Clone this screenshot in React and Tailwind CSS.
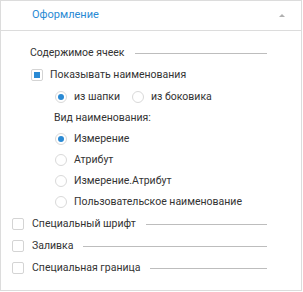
import React from "react";

const font = { fontFamily: 'Roboto, "Noto Sans", sans-serif' };

function Check({ checked }) {
    return (
        <span className="w-[12px] h-[12px] shrink-0 rounded-[2px] border border-[#d4d4d4] bg-white flex items-center justify-center">
            {checked && <span className="w-[6px] h-[6px] bg-[#2a8ad4]" />}
        </span>
    );
}

function Radio({ checked }) {
    return (
        <span className="w-[12px] h-[12px] shrink-0 rounded-full border border-[#d9d9d9] bg-white flex items-center justify-center">
            {checked && <span className="w-[6px] h-[6px] rounded-full bg-[#2a8ad4]" />}
        </span>
    );
}

function Line() {
    return <span className="flex-1 h-px bg-[#bdbdbd] ml-[10px]" />;
}

function RadioRow({ checked, label }) {
    return (
        <div className="flex items-center h-[21px] pl-[54px]">
            <Radio checked={checked} />
            <span className="ml-[7px]">{label}</span>
        </div>
    );
}

function Group({ label }) {
    return (
        <div className="flex items-center h-[22px] pl-[11px] pr-[34px]">
            <Check />
            <span className="ml-[8px]">{label}</span>
            <Line />
        </div>
    );
}

export default function App() {
    return (
        <div className="w-[303px] h-[292px] bg-white text-[10.5px] text-[#333333]" style={font}>
            <div className="w-[302px] h-[291px] border border-[#dcdcdc] flex flex-col">
                <div className="h-[30px] flex items-center justify-between pl-[31px] pr-[16px] border-b border-[#dcdcdc]">
                    <span className="text-[#2a8ad4] text-[11px]">Оформление</span>
                    <span className="w-0 h-0 border-l-[3px] border-r-[3px] border-b-[3px] border-l-transparent border-r-transparent border-b-[#b0b0b0]" />
                </div>

                <div className="flex items-center h-[22px] mt-[11px] pl-[29px] pr-[34px]">
                    <span>Содержимое ячеек</span>
                    <Line />
                </div>

                <div className="flex items-center h-[22px] pl-[30px]">
                    <Check checked />
                    <span className="ml-[7px]">Показывать наименования</span>
                </div>

                <div className="flex items-center h-[21px] pl-[54px]">
                    <Radio checked />
                    <span className="ml-[7px]">из шапки</span>
                    <span className="ml-[12px]"><Radio /></span>
                    <span className="ml-[7px]">из боковика</span>
                </div>

                <div className="flex items-center h-[21px] pl-[53px]">Вид наименования:</div>

                <RadioRow checked label="Измерение" />
                <RadioRow label="Атрибут" />
                <RadioRow label="Измерение.Атрибут" />
                <RadioRow label="Пользовательское наименование" />

                <div className="mt-[1px]">
                    <Group label="Специальный шрифт" />
                    <Group label="Заливка" />
                    <Group label="Специальная граница" />
                </div>
            </div>
        </div>
    );
}
